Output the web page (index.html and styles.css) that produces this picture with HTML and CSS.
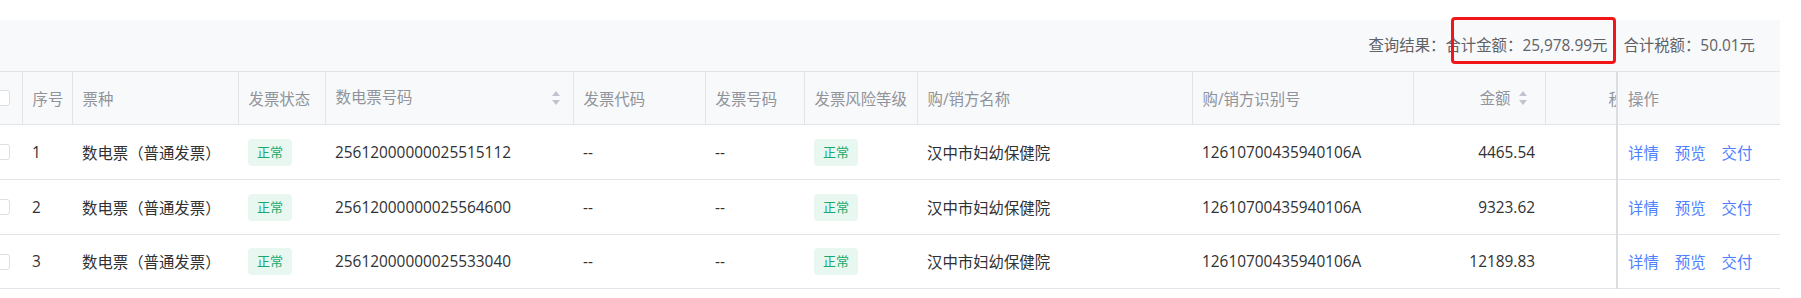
FILE: index.html
```html
<!DOCTYPE html>
<html lang="zh-CN">
<head>
    <meta charset="UTF-8">
    <meta name="viewport" content="width=device-width, initial-scale=1.0">
    <title>发票查询结果</title>
    <link rel="stylesheet" href="styles.css">
</head>
<body>
    <div class="panel">
        <div class="summary">
            <span>查询结果：</span><span class="mark">合计金额：25,978.99元</span><span class="tax">合计税额：50.01元</span>
        </div>
        <div class="table-wrap">
            <div class="scroll">
                <table class="grid">
                    <colgroup>
                        <col class="c-check"><col class="c-no"><col class="c-type"><col class="c-state">
                        <col class="c-num"><col class="c-code"><col class="c-inv"><col class="c-risk">
                        <col class="c-name"><col class="c-id"><col class="c-amount"><col class="c-tax">
                    </colgroup>
                    <thead>
                        <tr>
                            <th class="check"><span class="box"></span></th>
                            <th>序号</th>
                            <th>票种</th>
                            <th>发票状态</th>
                            <th class="sortable"><span>数电票号码</span><i class="caret"></i></th>
                            <th>发票代码</th>
                            <th>发票号码</th>
                            <th>发票风险等级</th>
                            <th>购/销方名称</th>
                            <th>购/销方识别号</th>
                            <th class="sortable num"><span>金额</span><i class="caret"></i></th>
                            <th class="num under"><span>税额</span></th>
                        </tr>
                    </thead>
                    <tbody>
                        <tr>
                            <td class="check"><span class="box"></span></td>
                            <td>1</td>
                            <td>数电票（普通发票）</td>
                            <td><span class="tag">正常</span></td>
                            <td>25612000000025515112</td>
                            <td>--</td>
                            <td>--</td>
                            <td><span class="tag">正常</span></td>
                            <td>汉中市妇幼保健院</td>
                            <td>12610700435940106A</td>
                            <td class="num">4465.54</td>
                            <td></td>
                        </tr>
                        <tr>
                            <td class="check"><span class="box"></span></td>
                            <td>2</td>
                            <td>数电票（普通发票）</td>
                            <td><span class="tag">正常</span></td>
                            <td>25612000000025564600</td>
                            <td>--</td>
                            <td>--</td>
                            <td><span class="tag">正常</span></td>
                            <td>汉中市妇幼保健院</td>
                            <td>12610700435940106A</td>
                            <td class="num">9323.62</td>
                            <td></td>
                        </tr>
                        <tr>
                            <td class="check"><span class="box"></span></td>
                            <td>3</td>
                            <td>数电票（普通发票）</td>
                            <td><span class="tag">正常</span></td>
                            <td>25612000000025533040</td>
                            <td>--</td>
                            <td>--</td>
                            <td><span class="tag">正常</span></td>
                            <td>汉中市妇幼保健院</td>
                            <td>12610700435940106A</td>
                            <td class="num">12189.83</td>
                            <td></td>
                        </tr>
                    </tbody>
                </table>
            </div>
            <table class="grid fixed">
                <thead>
                    <tr><th>操作</th></tr>
                </thead>
                <tbody>
                    <tr><td><a href="#">详情</a><a href="#">预览</a><a href="#">交付</a></td></tr>
                    <tr><td><a href="#">详情</a><a href="#">预览</a><a href="#">交付</a></td></tr>
                    <tr><td><a href="#">详情</a><a href="#">预览</a><a href="#">交付</a></td></tr>
                </tbody>
            </table>
        </div>
    </div>
</body>
</html>
```

FILE: styles.css
```css
body {
    margin: 0;
    background-color: #fff;
    font-family: "Open Sans", "Noto Sans CJK SC", sans-serif;
    font-size: 15.4px;
    color: #303133;
}
.panel {
    margin: 20px 0 0 -26px;
    width: 1806px;
    background-color: #f8f9fb;
}
.summary {
    height: 51px;
    display: flex;
    justify-content: flex-end;
    align-items: center;
    padding-right: 25px;
    box-sizing: border-box;
    color: #606266;
    line-height: 22px;
}
.mark {
    position: relative;
}
/* red marker drawn round the total */
.mark::after {
    content: "";
    position: absolute;
    left: 6px;
    right: -9px;
    top: -18px;
    bottom: -7px;
    border: 3px solid #f2161b;
    border-radius: 4px;
}
.tax {
    margin-left: 16px;
}
.table-wrap {
    display: flex;
    border-top: 1px solid #e2e4e9;
}
.scroll {
    flex: 1;
    overflow: hidden;
}
.grid {
    border-collapse: collapse;
    table-layout: fixed;
}
.scroll .grid {
    width: 1703px;
}
.c-check { width: 48px; }
.c-no { width: 50px; }
.c-type { width: 166px; }
.c-state { width: 87px; }
.c-num { width: 248px; }
.c-code { width: 132px; }
.c-inv { width: 99px; }
.c-risk { width: 113px; }
.c-name { width: 275px; }
.c-id { width: 221px; }
.c-amount { width: 132px; }
.c-tax { width: 132px; }
.grid th {
    height: 52px;
    padding: 0 10px;
    text-align: left;
    font-weight: normal;
    color: #909399;
    white-space: nowrap;
    border-right: 1px solid #e2e4e9;
    border-bottom: 1px solid #e2e4e9;
    background-color: #f8f9fb;
}
.grid td {
    height: 54px;
    padding: 0 10px;
    white-space: nowrap;
    background-color: #fff;
    border-bottom: 1px solid #e2e4e9;
}
.grid tbody tr:last-child td {
    height: 53px;
}
.grid .num {
    text-align: right;
}
/* tax column sits under the fixed column, only its first glyph peeks out */
.grid th.under {
    text-align: left;
    padding-left: 63px;
}
.grid th.check, .grid td.check {
    padding: 0 0 0 20px;
}
.box {
    display: block;
    width: 16px;
    height: 16px;
    box-sizing: border-box;
    border: 1px solid #dcdfe6;
    border-radius: 3px;
    background-color: #fff;
}
.sortable span {
    vertical-align: middle;
}
.caret {
    display: inline-block;
    vertical-align: middle;
    width: 24px;
    height: 22px;
    position: relative;
}
.caret::before, .caret::after {
    content: "";
    position: absolute;
    left: 8px;
    border: 4px solid transparent;
}
.caret::before {
    top: 0;
    border-bottom: 5px solid #c0c4cc;
}
.caret::after {
    bottom: 0;
    border-top: 5px solid #c0c4cc;
}
.grid th.sortable:not(.num) {
    line-height: 22px;
}
.grid th.sortable:not(.num) span {
    float: left;
}
.grid th.sortable:not(.num) .caret {
    float: right;
    margin-right: -5px;
}
.tag {
    display: inline-block;
    height: 27px;
    line-height: 27px;
    padding: 0 9px;
    font-size: 13px;
    color: #19a86c;
    background-color: #e8f7f0;
    border-radius: 4px;
}
.fixed {
    width: 164px;
    border-left: 2px solid #dcdde1;
}
.fixed th {
    border-right: none;
}
.fixed a {
    color: #4d7fff;
    text-decoration: none;
    margin-right: 16px;
}
.fixed a:last-child {
    margin-right: 0;
}
```
